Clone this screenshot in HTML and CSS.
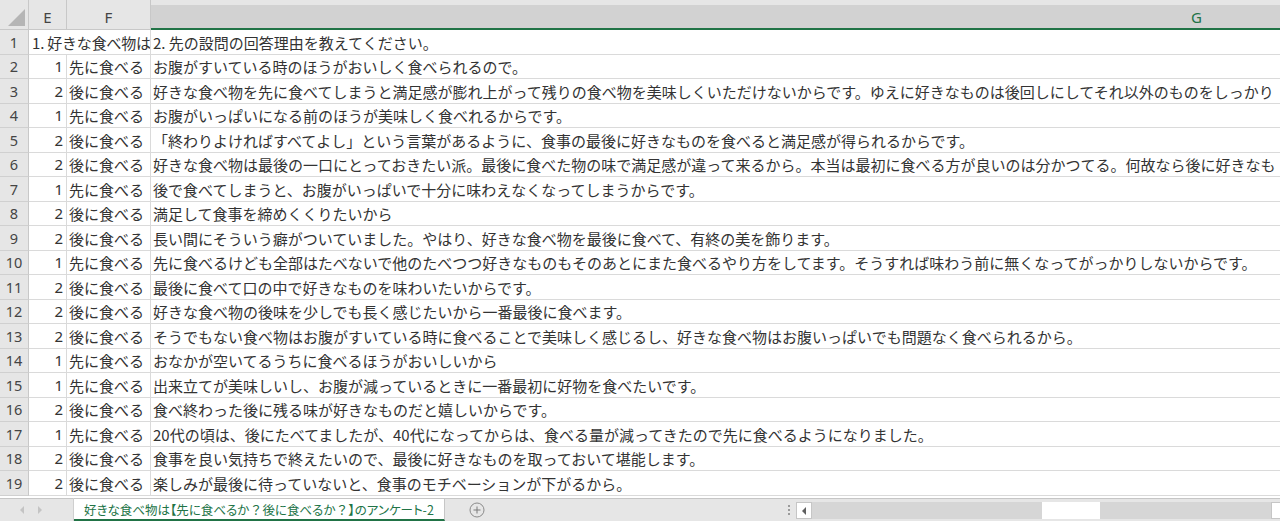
FILE: index.html
```html
<!DOCTYPE html>
<html lang="ja">
<head>
<meta charset="utf-8">
<title>Sheet</title>
<link rel="stylesheet" href="styles.css">
</head>
<body>
<div class="sheet">
  <div class="hrow">
    <div class="corner"><span class="tri"></span></div>
    <div class="ch">E</div>
    <div class="ch">F</div>
    <div class="ch sel">G</div>
  </div>
  <div class="row odd"><div class="rh">1</div><div class="c span">1. 好きな食べ物は</div><div class="c g">2. 先の設問の回答理由を教えてください。</div></div>
  <div class="row"><div class="rh">2</div><div class="c n">1</div><div class="c f">先に食べる</div><div class="c g">お腹がすいている時のほうがおいしく食べられるので。</div></div>
  <div class="row odd"><div class="rh">3</div><div class="c n">2</div><div class="c f">後に食べる</div><div class="c g">好きな食べ物を先に食べてしまうと満足感が膨れ上がって残りの食べ物を美味しくいただけないからです。ゆえに好きなものは後回しにしてそれ以外のものをしっかり</div></div>
  <div class="row"><div class="rh">4</div><div class="c n">1</div><div class="c f">先に食べる</div><div class="c g">お腹がいっぱいになる前のほうが美味しく食べれるからです。</div></div>
  <div class="row odd"><div class="rh">5</div><div class="c n">2</div><div class="c f">後に食べる</div><div class="c g">「終わりよければすべてよし」という言葉があるように、食事の最後に好きなものを食べると満足感が得られるからです。</div></div>
  <div class="row"><div class="rh">6</div><div class="c n">2</div><div class="c f">後に食べる</div><div class="c g">好きな食べ物は最後の一口にとっておきたい派。最後に食べた物の味で満足感が違って来るから。本当は最初に食べる方が良いのは分かつてる。何故なら後に好きなも</div></div>
  <div class="row odd"><div class="rh">7</div><div class="c n">1</div><div class="c f">先に食べる</div><div class="c g">後で食べてしまうと、お腹がいっぱいで十分に味わえなくなってしまうからです。</div></div>
  <div class="row"><div class="rh">8</div><div class="c n">2</div><div class="c f">後に食べる</div><div class="c g">満足して食事を締めくくりたいから</div></div>
  <div class="row odd"><div class="rh">9</div><div class="c n">2</div><div class="c f">後に食べる</div><div class="c g">長い間にそういう癖がついていました。やはり、好きな食べ物を最後に食べて、有終の美を飾ります。</div></div>
  <div class="row"><div class="rh">10</div><div class="c n">1</div><div class="c f">先に食べる</div><div class="c g">先に食べるけども全部はたべないで他のたべつつ好きなものもそのあとにまた食べるやり方をしてます。そうすれば味わう前に無くなってがっかりしないからです。</div></div>
  <div class="row odd"><div class="rh">11</div><div class="c n">2</div><div class="c f">後に食べる</div><div class="c g">最後に食べて口の中で好きなものを味わいたいからです。</div></div>
  <div class="row"><div class="rh">12</div><div class="c n">2</div><div class="c f">後に食べる</div><div class="c g">好きな食べ物の後味を少しでも長く感じたいから一番最後に食べます。</div></div>
  <div class="row odd"><div class="rh">13</div><div class="c n">2</div><div class="c f">後に食べる</div><div class="c g">そうでもない食べ物はお腹がすいている時に食べることで美味しく感じるし、好きな食べ物はお腹いっぱいでも問題なく食べられるから。</div></div>
  <div class="row"><div class="rh">14</div><div class="c n">1</div><div class="c f">先に食べる</div><div class="c g">おなかが空いてるうちに食べるほうがおいしいから</div></div>
  <div class="row odd"><div class="rh">15</div><div class="c n">1</div><div class="c f">先に食べる</div><div class="c g">出来立てが美味しいし、お腹が減っているときに一番最初に好物を食べたいです。</div></div>
  <div class="row"><div class="rh">16</div><div class="c n">2</div><div class="c f">後に食べる</div><div class="c g">食べ終わった後に残る味が好きなものだと嬉しいからです。</div></div>
  <div class="row odd"><div class="rh">17</div><div class="c n">1</div><div class="c f">先に食べる</div><div class="c g">20代の頃は、後にたべてましたが、40代になってからは、食べる量が減ってきたので先に食べるようになりました。</div></div>
  <div class="row"><div class="rh">18</div><div class="c n">2</div><div class="c f">後に食べる</div><div class="c g">食事を良い気持ちで終えたいので、最後に好きなものを取っておいて堪能します。</div></div>
  <div class="row odd"><div class="rh">19</div><div class="c n">2</div><div class="c f">後に食べる</div><div class="c g">楽しみが最後に待っていないと、食事のモチベーションが下がるから。</div></div>
</div>
<div class="tabbar">
  <div class="nav">
    <span class="arr left"></span>
    <span class="arr right"></span>
  </div>
  <div class="tab">好きな食べ物は【先に食べるか<span class="q">？</span>後に食べるか<span class="q">？</span>】のアンケート-2</div>
  <div class="add">
    <svg width="16" height="16" viewBox="0 0 16 16"><circle cx="8" cy="8" r="7" fill="none" stroke="#8a8a8a" stroke-width="1"/><path d="M8 4.5v7M4.5 8h7" stroke="#7a7a7a" stroke-width="1"/></svg>
  </div>
  <div class="spacer"></div>
  <div class="dots"><i></i><i></i><i></i></div>
  <div class="hscroll">
    <div class="btn lbtn"><span class="sarr"></span></div>
    <div class="track">
      <div class="thumb"></div>
    </div>
    <div class="btn rbtn"></div>
  </div>
</div>
</body>
</html>
```
FILE: styles.css
```css
* { box-sizing: border-box; }
html, body {
  margin: 0;
  padding: 0;
  width: 1280px;
  height: 521px;
  overflow: hidden;
  background: #ffffff;
}
body {
  font-family: "Noto Sans CJK JP", "Noto Sans", sans-serif;
  color: #333333;
}
.sheet {
  width: 1280px;
  overflow: hidden;
}
.hrow {
  display: grid;
  grid-template-columns: 29px 38px 84px 2092px;
  height: 30px;
  background: #e6e6e6;
}
.corner {
  position: relative;
  border-right: 1px solid #c8c8c8;
  border-bottom: 1px solid #c8c8c8;
}
.tri {
  position: absolute;
  right: 3px;
  bottom: 3px;
  width: 0;
  height: 0;
  border-left: 17px solid transparent;
  border-bottom: 17px solid #b5b5b5;
}
.ch {
  display: flex;
  align-items: center;
  justify-content: center;
  padding-top: 5px;
  font-family: "Noto Sans", "Liberation Sans", sans-serif;
  font-size: 15px;
  color: #444444;
  border-right: 1px solid #c8c8c8;
  border-bottom: 1px solid #c8c8c8;
}
.ch.sel {
  background: #d2d2d2;
  border-top: 5px solid #e6e6e6;
  padding-top: 0;
  color: #217346;
  border-bottom: 2px solid #217346;
}
.row {
  display: grid;
  grid-template-columns: 29px 38px 84px 1129px;
  height: 24px;
  font-size: 15px;
  line-height: 1;
}
.row.odd { height: 25px; }
.rh {
  display: flex;
  align-items: center;
  justify-content: center;
  background: #e6e6e6;
  color: #444444;
  font-family: "Noto Sans", "Liberation Sans", sans-serif;
  font-size: 14.5px;
  border-right: 1px solid #c8c8c8;
  border-bottom: 1px solid #d0d0d0;
}
.c {
  display: flex;
  align-items: center;
  white-space: nowrap;
  overflow: hidden;
  border-right: 1px solid #dadada;
  border-bottom: 1px solid #dadada;
}
.c.span {
  grid-column: span 2;
  padding-left: 3px;
  letter-spacing: -0.2px;
}
.c.n {
  justify-content: flex-end;
  padding-right: 3px;
  font-family: "Noto Sans", "Liberation Sans", sans-serif;
  font-size: 15px;
}
.c.f { padding-left: 2px; }
.c.g { padding-left: 2px; border-right: none; }

.tabbar {
  display: flex;
  align-items: stretch;
  height: 25px;
  border-top: 2px solid #ffffff;
  background: #e6e6e6;
  box-shadow: inset 0 1px 0 #c6c6c6;
}
.nav {
  width: 74px;
  display: flex;
  align-items: center;
  gap: 14px;
  padding-left: 20px;
  padding-top: 1px;
  border-right: 1px solid #cfcfcf;
}
.arr {
  width: 0;
  height: 0;
  border-top: 4px solid transparent;
  border-bottom: 4px solid transparent;
}
.arr.left { border-right: 4px solid #c4c4c4; }
.arr.right { border-left: 4px solid #c4c4c4; }
.tab {
  width: 371px;
  margin-top: 1px;
  background: #ffffff;
  color: #217346;
  font-size: 12.5px;
  font-feature-settings: "palt";
  display: flex;
  align-items: center;
  justify-content: center;
  border-bottom: 2px solid #217346;
  white-space: nowrap;
  border-right: 1px solid #c6c6c6;
}
.tab .q {
  padding: 0 2px;
}
.add {
  width: 64px;
  display: flex;
  align-items: center;
  padding-left: 24px;
  padding-top: 1px;
}
.spacer { flex: 0 0 272px; }
.dots {
  width: 15px;
  display: flex;
  flex-direction: column;
  align-items: center;
  justify-content: center;
  gap: 2px;
  padding-top: 1px;
}
.dots i {
  display: block;
  width: 2px;
  height: 2px;
  background: #9a9a9a;
}
.hscroll {
  flex: 1;
  display: flex;
  padding: 4px 0 2px;
}
.btn {
  width: 16px;
  background: #ffffff;
  border: 1px solid #c6c6c6;
  display: flex;
  align-items: center;
  justify-content: center;
}
.sarr {
  width: 0;
  height: 0;
  border-top: 4px solid transparent;
  border-bottom: 4px solid transparent;
  border-right: 4px solid #606060;
}
.track {
  flex: 1;
  background: #d6d6d6;
  position: relative;
}
.thumb {
  position: absolute;
  left: 230px;
  top: 0;
  bottom: 0;
  width: 58px;
  background: #ffffff;
}
.rbtn { width: 9px; border-right: none; }
```
